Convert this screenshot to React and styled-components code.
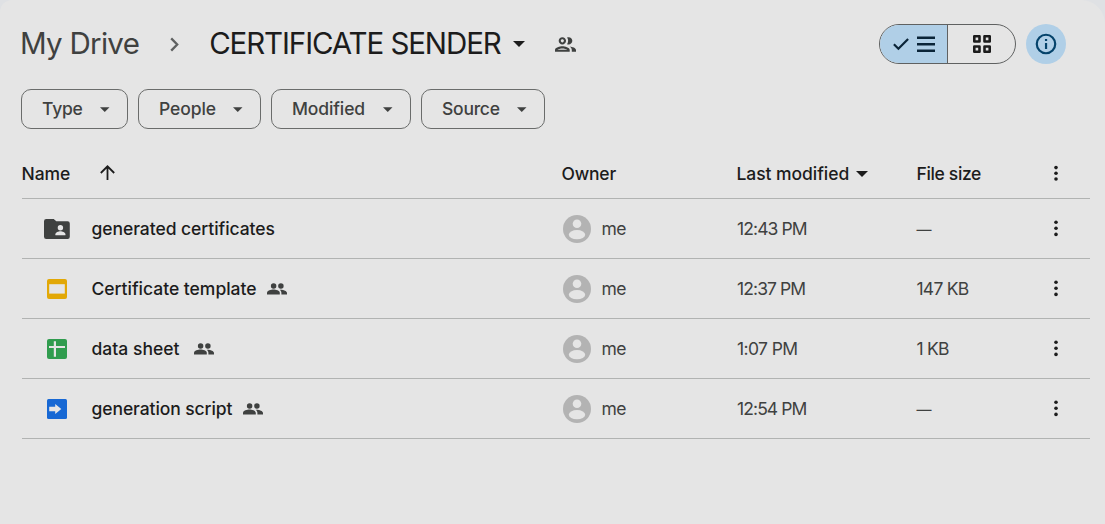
import React from "react";
import styled, { createGlobalStyle } from "styled-components";

const ink = "#1c1c1c";
const muted = "#3f4140";
const surface = "#e5e5e5";

const GlobalStyle = createGlobalStyle`
  * { box-sizing: border-box; }
  body { margin: 0; background: #dfe1e4; font-family: Inter, "Liberation Sans", sans-serif; }
  svg { display: block; flex: none; overflow: visible; }
`;

const Panel = styled.main`
  width: 1105px;
  height: 524px;
  padding: 24px 15px 0 21px;
  background: ${surface};
  border-radius: 12px 24px 0 0;
  overflow: hidden;
`;

const Toolbar = styled.header`
  display: flex;
  align-items: center;
  height: 40px;
  padding-right: 24px;
`;

const Crumb = styled.span`
  padding-bottom: 1px;
  font-size: 29.5px;
  line-height: 39px;
  font-weight: ${(p) => (p.$current ? 380 : 370)};
  letter-spacing: ${(p) => (p.$current ? "-1.1px" : "-0.72px")};
  color: ${(p) => (p.$current ? ink : muted)};
  white-space: nowrap;
`;

const Breadcrumbs = styled.nav`
  display: flex;
  align-items: center;
  flex: 1;
  margin-left: -1px;
`;

const Separator = styled.span`
  display: flex;
  justify-content: center;
  width: 70px;
`;

const CaretSlot = styled.span`
  margin-left: ${(p) => p.$gap}px;
`;

const SharedSlot = styled.span`
  margin-left: 30px;
  padding-top: 1px;
`;

const ViewToggle = styled.div`
  display: flex;
  width: 137px;
  height: 40px;
  border: 1px solid #5f6161;
  border-radius: 20px;
  overflow: hidden;
`;

const ToggleSide = styled.div`
  display: flex;
  align-items: center;
  justify-content: center;
  gap: 8px;
  flex: ${(p) => (p.$active ? "0 0 68px" : "1")};
  padding-left: ${(p) => (p.$active ? 1 : 0)}px;
  background: ${(p) => (p.$active ? "#b0cfe7" : "transparent")};
  border-right: ${(p) => (p.$active ? "1px solid #5f6161" : "0")};
`;

const InfoButton = styled.div`
  display: flex;
  align-items: center;
  justify-content: center;
  width: 40px;
  height: 40px;
  margin-left: 10px;
  border-radius: 50%;
  background: #b0cfe7;
`;

const Filters = styled.div`
  display: flex;
  gap: 10px;
  margin-top: 25px;
`;

const Chip = styled.div`
  display: flex;
  align-items: center;
  justify-content: space-between;
  width: ${(p) => p.$width}px;
  height: 40px;
  padding: 0 18px 0 20px;
  border: 1px solid #6a6c6b;
  border-radius: 10px;
  color: ${muted};
  font-size: 17.5px;
  font-weight: 480;
  letter-spacing: ${(p) => p.$spacing || 0}px;
`;

const ChipLabel = styled.span`
  padding-bottom: 2px;
`;

const Table = styled.section`
  width: 1068.5px;
  margin: 20px 0 0 0.5px;
`;

const Row = styled.div`
  display: grid;
  grid-template-columns: 540px 175px 180px 123.5px 1fr;
  align-items: center;
  height: ${(p) => (p.$head ? 50 : 60)}px;
  border-bottom: 1px solid #b1b3b2;
  font-size: 17.5px;
  color: ${muted};
`;

const HeadCell = styled.div`
  display: flex;
  align-items: center;
  color: ${ink};
  font-weight: 490;
  letter-spacing: ${(p) => p.$spacing || 0}px;
  white-space: nowrap;
`;

const NameHeading = styled(HeadCell)`
  gap: 29.5px;
`;

const SortSlot = styled.span`
  padding-bottom: 3px;
`;

const NameCell = styled.div`
  display: flex;
  align-items: center;
`;

const FileIcon = styled.span`
  display: flex;
  justify-content: center;
  width: 70px;
  padding-left: 1px;
`;

const FileName = styled.span`
  color: ${ink};
  font-weight: 460;
  letter-spacing: ${(p) => p.$spacing || 0}px;
  white-space: nowrap;
`;

const ShareMark = styled.span`
  margin: 1px 0 0 ${(p) => p.$gap}px;
`;

const OwnerCell = styled.div`
  display: flex;
  align-items: center;
  gap: 10.5px;
  padding-left: 1.5px;
  letter-spacing: -0.5px;
`;

const TimeCell = styled.div`
  padding-left: 0.5px;
  letter-spacing: ${(p) => p.$spacing || -0.9}px;
`;

const SizeCell = styled.div`
  letter-spacing: -0.75px;
`;

const Dash = styled.span`
  font-size: 15px;
  letter-spacing: 0;
`;

const MenuCell = styled.div`
  padding-left: 14px;
`;

const Caret = ({ w = 12, h = 6, color = ink }) => (
  <svg width={w} height={h} viewBox="0 0 12 6"><path d="M0 0h12L6 6z" fill={color} /></svg>
);

const Chevron = () => (
  <svg width="9" height="15" viewBox="0 0 9 15">
    <path d="M1.2 1.4l6 6.1-6 6.1" fill="none" stroke="#5f6161" strokeWidth="2.3" />
  </svg>
);

const GroupOutline = () => (
  <svg width="21" height="15" viewBox="2 5 20 14" fill={muted}>
    <path d="M9 13.75c-2.34 0-7 1.17-7 3.5V19h14v-1.75c0-2.33-4.66-3.5-7-3.5zM4.34 17c.84-.58 2.87-1.25 4.66-1.25s3.82.67 4.66 1.25H4.34zM9 12c1.93 0 3.5-1.57 3.5-3.5S10.93 5 9 5 5.5 6.57 5.5 8.5 7.07 12 9 12zm0-5c.83 0 1.5.67 1.5 1.5S9.83 10 9 10s-1.5-.67-1.5-1.5S8.17 7 9 7zm7.04 6.81c1.16.84 1.96 1.96 1.96 3.44V19h4v-1.75c0-2.02-3.5-3.17-5.96-3.44zM15 12c1.93 0 3.5-1.57 3.5-3.5S16.93 5 15 5c-.54 0-1.04.13-1.5.35.63.89 1 1.98 1 3.15s-.37 2.26-1 3.15c.46.22.96.35 1.5.35z" />
  </svg>
);

const GroupFilled = () => (
  <svg width="20" height="12" viewBox="0 0 20 12" fill={muted}>
    <circle cx="6.6" cy="3" r="2.75" />
    <circle cx="13.9" cy="3" r="2.75" />
    <path d="M0 11.5V10c0-2.4 4.2-3.4 6.5-3.4S12.8 7.6 12.8 10v1.5z" />
    <path d="M14.4 11.5V10c0-1.3-.6-2.4-1.6-3.2C15.4 6.4 20 7.7 20 10v1.5z" />
  </svg>
);

const Check = () => (
  <svg width="16" height="12" viewBox="0 0 16 12">
    <path d="M.9 6.2l4.5 4.5L15.1 1" fill="none" stroke="#0a2438" strokeWidth="2.2" />
  </svg>
);

const ListLines = () => (
  <svg width="18" height="16" viewBox="0 0 18 16">
    <path d="M0 1.7h18M0 8.2h18M0 14.7h18" stroke="#0a2438" strokeWidth="2.5" />
  </svg>
);

const GridView = () => (
  <svg width="18" height="18" viewBox="0 0 18 18" fill="none" stroke={ink} strokeWidth="2.6" strokeLinejoin="round">
    <path d="M1.3 1.3h5.2v5.2H1.3zM11.5 1.3h5.2v5.2h-5.2zM1.3 11.5h5.2v5.2H1.3zM11.5 11.5h5.2v5.2h-5.2z" />
  </svg>
);

const Info = () => (
  <svg width="20" height="20" viewBox="0 0 21 21">
    <circle cx="10.5" cy="10.5" r="9.7" fill="none" stroke="#05436b" strokeWidth="2.3" />
    <path d="M9.4 5.2h2.3v2.2H9.4zM9.4 9.4h2.3v6.4H9.4z" fill="#05436b" />
  </svg>
);

const ArrowUp = () => (
  <svg width="15" height="15" viewBox="0 0 15 15">
    <path d="M7.5 15V1.5M.8 8l6.7-6.7L14.2 8" fill="none" stroke={ink} strokeWidth="1.8" />
  </svg>
);

const MoreDots = ({ tight }) => (
  <svg width="4" height="17" viewBox="0 0 4 17" fill={ink}>
    <circle cx="2" cy={tight ? 2.6 : 2.2} r="1.8" />
    <circle cx="2" cy="8.3" r="1.8" />
    <circle cx="2" cy={tight ? 14 : 14.4} r="1.8" />
  </svg>
);

const Avatar = () => (
  <svg width="28" height="28" viewBox="0 0 28 28">
    <circle cx="14" cy="14" r="14" fill="#b3b3b3" />
    <circle cx="14" cy="8.7" r="4.3" fill={surface} />
    <ellipse cx="14" cy="19.7" rx="8.2" ry="4.6" fill={surface} />
  </svg>
);

const FolderIcon = () => (
  <svg width="26" height="20" viewBox="0 0 26 20">
    <path d="M2.2 0h7.5l2.6 2.2h11.3A2.2 2.2 0 0 1 25.8 4.4v13.4A2.2 2.2 0 0 1 23.6 20H2.2A2.2 2.2 0 0 1 0 17.8V2.2A2.2 2.2 0 0 1 2.2 0z" fill={muted} />
    <circle cx="16.4" cy="8.7" r="2.7" fill={surface} />
    <path d="M11.4 16.2v-.9c0-1.9 3.2-3 5-3s5 1.1 5 3v.9z" fill={surface} />
  </svg>
);

const SlidesIcon = () => (
  <svg width="20" height="20" viewBox="0 0 20 20">
    <rect width="20" height="20" rx="2" fill="#e2a806" />
    <rect x="2.2" y="5.2" width="15.6" height="9.4" fill={surface} />
  </svg>
);

const SheetsIcon = () => (
  <svg width="20" height="20" viewBox="0 0 20 20">
    <rect width="20" height="20" rx="2" fill="#309c4e" />
    <path d="M2 8h16M7.9 2.2v15.6" stroke={surface} strokeWidth="2.2" />
  </svg>
);

const ScriptIcon = () => (
  <svg width="20" height="20" viewBox="0 0 20 20">
    <rect width="20" height="20" rx="1.5" fill="#1768d4" />
    <path d="M2.2 7.7h6V4.9l6.1 5.1-6.1 5.1v-2.8h-6z" fill={surface} />
  </svg>
);

const filters = [
  { label: "Type", width: 107, spacing: -0.2 },
  { label: "People", width: 123, spacing: -0.1 },
  { label: "Modified", width: 140, spacing: -0.12 },
  { label: "Source", width: 124, spacing: -0.25 },
];

const files = [
  { name: "generated certificates", Icon: FolderIcon, time: "12:43 PM", spacing: -0.06 },
  { name: "Certificate template", Icon: SlidesIcon, time: "12:37 PM", size: "147 KB", gap: 10.5, spacing: -0.02 },
  { name: "data sheet", Icon: SheetsIcon, time: "1:07 PM", timeSpacing: -0.6, size: "1 KB", gap: 14.5, spacing: 0.02 },
  { name: "generation script", Icon: ScriptIcon, time: "12:54 PM", gap: 11, spacing: -0.09 },
];

export default function App() {
  return (
    <Panel>
      <GlobalStyle />
      <Toolbar>
        <Breadcrumbs>
          <Crumb>My Drive</Crumb>
          <Separator><Chevron /></Separator>
          <Crumb $current>CERTIFICATE SENDER</Crumb>
          <CaretSlot $gap={12}><Caret /></CaretSlot>
          <SharedSlot><GroupOutline /></SharedSlot>
        </Breadcrumbs>
        <ViewToggle>
          <ToggleSide $active><Check /><ListLines /></ToggleSide>
          <ToggleSide><GridView /></ToggleSide>
        </ViewToggle>
        <InfoButton><Info /></InfoButton>
      </Toolbar>

      <Filters>
        {filters.map((f) => (
          <Chip key={f.label} $width={f.width} $spacing={f.spacing}>
            <ChipLabel>{f.label}</ChipLabel>
            <Caret w={9.5} h={5} color={muted} />
          </Chip>
        ))}
      </Filters>

      <Table>
        <Row $head>
          <NameHeading $spacing={-0.1}>Name<SortSlot><ArrowUp /></SortSlot></NameHeading>
          <HeadCell $spacing={-0.2}>Owner</HeadCell>
          <HeadCell $spacing={-0.06}>Last modified<CaretSlot $gap={6.5}><Caret /></CaretSlot></HeadCell>
          <HeadCell $spacing={-0.35}>File size</HeadCell>
          <MenuCell><MoreDots tight /></MenuCell>
        </Row>
        {files.map(({ name, Icon, time, timeSpacing, size, gap, spacing }) => (
          <Row key={name}>
            <NameCell>
              <FileIcon><Icon /></FileIcon>
              <FileName $spacing={spacing}>{name}</FileName>
              {gap && <ShareMark $gap={gap}><GroupFilled /></ShareMark>}
            </NameCell>
            <OwnerCell><Avatar />me</OwnerCell>
            <TimeCell $spacing={timeSpacing}>{time}</TimeCell>
            <SizeCell>{size || <Dash>—</Dash>}</SizeCell>
            <MenuCell><MoreDots /></MenuCell>
          </Row>
        ))}
      </Table>
    </Panel>
  );
}
